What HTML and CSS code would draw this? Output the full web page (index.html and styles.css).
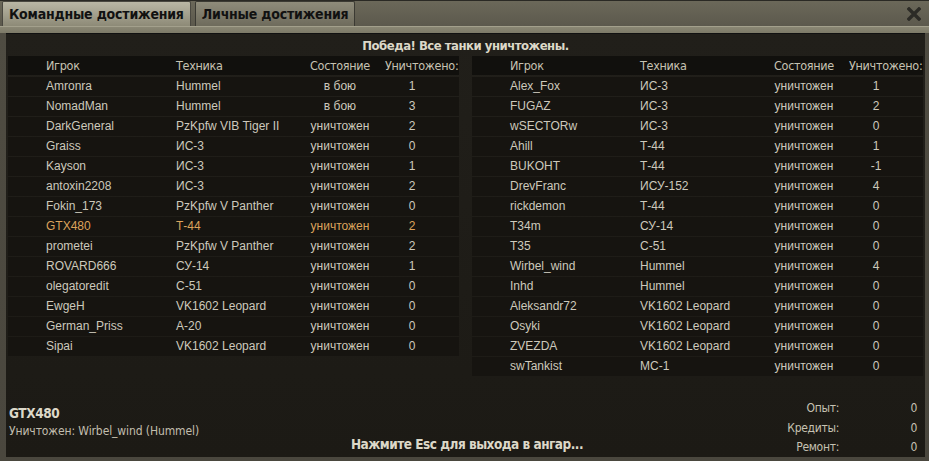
FILE: index.html
```html
<!DOCTYPE html>
<html lang="ru">
<head>
    <meta charset="UTF-8">
    <title>Итоги боя</title>
    <link rel="stylesheet" href="styles.css">
</head>
<body>
    <div class="window">
        <!-- Вкладки -->
        <div class="tabs">
            <div class="tab active">Командные достижения</div>
            <div class="tab">Личные достижения</div>
            <div class="close">
                <svg width="14" height="14" viewBox="0 0 14 14">
                    <path d="M2 2 L12 12 M12 2 L2 12" stroke="#2c2b26" stroke-width="3.4" stroke-linecap="square"/>
                </svg>
            </div>
        </div>

        <div class="frame">
            <div class="panel">
                <div class="title">Победа! Все танки уничтожены.</div>

                <div class="tables">
                    <!-- Своя команда -->
                    <div class="team">
                        <div class="row head"><span>Игрок</span><span>Техника</span><span class="state">Состояние</span><span class="kills">Уничтожено:</span></div>
                        <div class="row"><span>Amronra</span><span>Hummel</span><span class="state">в бою</span><span class="kills">1</span></div>
                        <div class="row"><span>NomadMan</span><span>Hummel</span><span class="state">в бою</span><span class="kills">3</span></div>
                        <div class="row"><span>DarkGeneral</span><span>PzKpfw VIB Tiger II</span><span class="state">уничтожен</span><span class="kills">2</span></div>
                        <div class="row"><span>Graiss</span><span>ИС-3</span><span class="state">уничтожен</span><span class="kills">0</span></div>
                        <div class="row"><span>Kayson</span><span>ИС-3</span><span class="state">уничтожен</span><span class="kills">1</span></div>
                        <div class="row"><span>antoxin2208</span><span>ИС-3</span><span class="state">уничтожен</span><span class="kills">2</span></div>
                        <div class="row"><span>Fokin_173</span><span>PzKpfw V Panther</span><span class="state">уничтожен</span><span class="kills">0</span></div>
                        <div class="row me"><span>GTX480</span><span>Т-44</span><span class="state">уничтожен</span><span class="kills">2</span></div>
                        <div class="row"><span>prometei</span><span>PzKpfw V Panther</span><span class="state">уничтожен</span><span class="kills">2</span></div>
                        <div class="row"><span>ROVARD666</span><span>СУ-14</span><span class="state">уничтожен</span><span class="kills">1</span></div>
                        <div class="row"><span>olegatoredit</span><span>С-51</span><span class="state">уничтожен</span><span class="kills">0</span></div>
                        <div class="row"><span>EwgeH</span><span>VK1602 Leopard</span><span class="state">уничтожен</span><span class="kills">0</span></div>
                        <div class="row"><span>German_Priss</span><span>А-20</span><span class="state">уничтожен</span><span class="kills">0</span></div>
                        <div class="row"><span>Sipai</span><span>VK1602 Leopard</span><span class="state">уничтожен</span><span class="kills">0</span></div>
                    </div>

                    <!-- Противник -->
                    <div class="team">
                        <div class="row head"><span>Игрок</span><span>Техника</span><span class="state">Состояние</span><span class="kills">Уничтожено:</span></div>
                        <div class="row"><span>Alex_Fox</span><span>ИС-3</span><span class="state">уничтожен</span><span class="kills">1</span></div>
                        <div class="row"><span>FUGAZ</span><span>ИС-3</span><span class="state">уничтожен</span><span class="kills">2</span></div>
                        <div class="row"><span>wSECTORw</span><span>ИС-3</span><span class="state">уничтожен</span><span class="kills">0</span></div>
                        <div class="row"><span>Ahill</span><span>Т-44</span><span class="state">уничтожен</span><span class="kills">1</span></div>
                        <div class="row"><span>BUKOHT</span><span>Т-44</span><span class="state">уничтожен</span><span class="kills">-1</span></div>
                        <div class="row"><span>DrevFranc</span><span>ИСУ-152</span><span class="state">уничтожен</span><span class="kills">4</span></div>
                        <div class="row"><span>rickdemon</span><span>Т-44</span><span class="state">уничтожен</span><span class="kills">0</span></div>
                        <div class="row"><span>T34m</span><span>СУ-14</span><span class="state">уничтожен</span><span class="kills">0</span></div>
                        <div class="row"><span>T35</span><span>С-51</span><span class="state">уничтожен</span><span class="kills">0</span></div>
                        <div class="row"><span>Wirbel_wind</span><span>Hummel</span><span class="state">уничтожен</span><span class="kills">4</span></div>
                        <div class="row"><span>Inhd</span><span>Hummel</span><span class="state">уничтожен</span><span class="kills">0</span></div>
                        <div class="row"><span>Aleksandr72</span><span>VK1602 Leopard</span><span class="state">уничтожен</span><span class="kills">0</span></div>
                        <div class="row"><span>Osyki</span><span>VK1602 Leopard</span><span class="state">уничтожен</span><span class="kills">0</span></div>
                        <div class="row"><span>ZVEZDA</span><span>VK1602 Leopard</span><span class="state">уничтожен</span><span class="kills">0</span></div>
                        <div class="row"><span>swTankist</span><span>МС-1</span><span class="state">уничтожен</span><span class="kills">0</span></div>
                    </div>
                </div>

                <!-- Итог игрока -->
                <div class="summary">
                    <div class="player">
                        <div class="nick">GTX480</div>
                        <div class="killer">Уничтожен: Wirbel_wind (Hummel)</div>
                    </div>
                    <div class="esc">Нажмите Esc для выхода в ангар...</div>
                    <div class="stats">
                        <span class="label">Опыт:</span><span class="value">0</span>
                        <span class="label">Кредиты:</span><span class="value">0</span>
                        <span class="label">Ремонт:</span><span class="value">0</span>
                    </div>
                </div>
            </div>
        </div>
    </div>
</body>
</html>
```

FILE: styles.css
```css
/* Сброс */
html, body {
    margin: 0;
    padding: 0;
    width: 929px;
    height: 461px;
    overflow: hidden;
    background: #4d4a40;
}

.window {
    width: 929px;
    height: 461px;
    display: flex;
    flex-direction: column;
    background: #4f4c42;
    font-family: 'Liberation Sans', Arial, sans-serif;
}

/* Вкладки */
.tabs {
    height: 26px;
    display: flex;
    align-items: flex-end;
    gap: 4px;
    padding: 0 0 0 2px;
    border-top: 1px solid #2a2924;
    box-sizing: border-box;
    background: linear-gradient(#6b6859, #5c594d);
}

.tab {
    height: 24px;
    line-height: 25px;
    padding: 0 6px;
    font-family: 'Liberation Sans Narrow', 'DejaVu Sans Condensed', 'Arial Narrow', sans-serif;
    font-stretch: condensed;
    font-weight: bold;
    font-size: 14px;
    letter-spacing: -0.2px;
    color: #111;
    background: linear-gradient(#8f8c7b, #6e6b5c);
    border: 1px solid #3b3a33;
    border-bottom: none;
    border-radius: 2px 2px 0 0;
}

.tab.active {
    background: linear-gradient(#bab7a5, #8d8a77);
    border-color: #4a4840;
}

.close {
    margin-left: auto;
    align-self: center;
    padding: 0 8px 0 0;
    display: flex;
}

/* Рамка вокруг панели */
.frame {
    flex: 1;
    display: flex;
    padding: 6px 5px 4px 6px;
    border-top: 1px solid #a3a08c;
    background: linear-gradient(#8a8774 0, #7d7a68 6px, #4f4c42 6px, #4a473e);
}

.panel {
    flex: 1;
    display: flex;
    flex-direction: column;
    background: linear-gradient(#211f1a, #1c1a15);
    border-top: 1px solid #111;
    color: #cdc9bc;
}

.title {
    height: 22px;
    line-height: 23px;
    text-align: center;
    font-family: 'Liberation Sans Narrow', 'DejaVu Sans Condensed', 'Arial Narrow', sans-serif;
    font-stretch: condensed;
    font-weight: bold;
    font-size: 13px;
    letter-spacing: -0.5px;
    color: #dcd8c8;
}

/* Таблицы команд */
.tables {
    display: flex;
    gap: 13px;
    padding: 0 2px 0 2px;
}

.team {
    width: 451px;
    display: flex;
    flex-direction: column;
    gap: 1px;
}

.row {
    display: grid;
    grid-template-columns: 130px 122px 84px 78px;
    padding-left: 38px;
    height: 19px;
    line-height: 19px;
    font-size: 12px;
    background: #161410;
    white-space: nowrap;
}

.row .state {
    text-align: center;
}

.row .kills {
    text-align: center;
    padding-right: 18px;
}

.row.head {
    font-family: 'Liberation Sans Narrow', 'DejaVu Sans Condensed', 'Arial Narrow', sans-serif;
    font-stretch: condensed;
    font-size: 12.5px;
    letter-spacing: -0.3px;
    color: #c6c2b2;
    background: #11100d;
    margin-bottom: 1px;
}

.row.head .kills {
    text-align: left;
    padding: 0 0 0 3px;
}

.row.me {
    color: #dca35c;
}

/* Итог */
.summary {
    margin-top: auto;
    display: grid;
    grid-template-columns: 1fr auto 1fr;
    align-items: end;
    padding: 0 8px 1px 3px;
    font-family: 'Liberation Sans Narrow', 'DejaVu Sans Condensed', 'Arial Narrow', sans-serif;
    font-stretch: condensed;
}

.nick {
    font-weight: bold;
    font-size: 13.5px;
    letter-spacing: -0.4px;
    color: #dcd8c8;
    margin-bottom: 3px;
}

.killer {
    font-size: 12px;
    letter-spacing: -0.1px;
    color: #c2beae;
    padding-bottom: 18px;
}

.esc {
    font-weight: bold;
    font-size: 13.5px;
    letter-spacing: -0.5px;
    color: #dcd8c8;
    padding-bottom: 4px;
    padding-left: 8px;
}

.stats {
    justify-self: end;
    display: grid;
    grid-template-columns: auto 78px;
    row-gap: 1.5px;
    font-size: 12px;
    letter-spacing: -0.3px;
    color: #c6c2b2;
    line-height: 18px;
}

.stats .label {
    text-align: right;
}

.stats .value {
    text-align: right;
}
```
